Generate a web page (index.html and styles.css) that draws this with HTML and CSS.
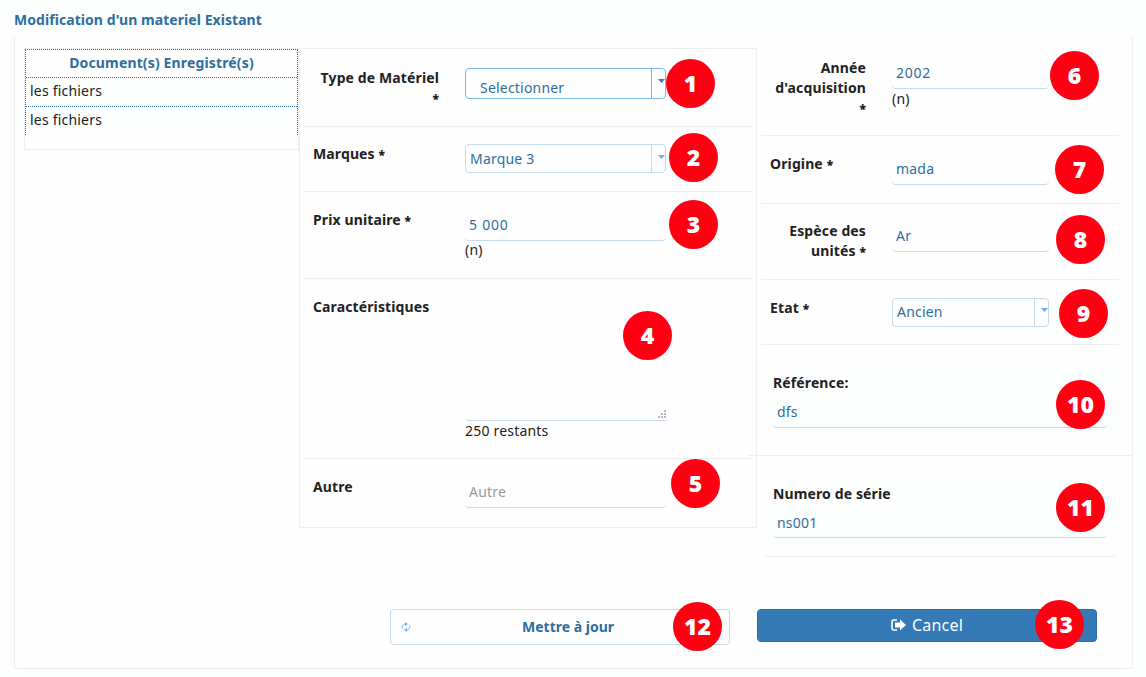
FILE: index.html
```html
<!DOCTYPE html>
<html lang="fr">
<head>
<meta charset="utf-8">
<title>Modification d'un materiel Existant</title>
<link rel="stylesheet" href="styles.css">
</head>
<body>
<div class="page">
  <h1 class="title">Modification d'un materiel Existant</h1>
  <main class="panel">
    <div class="columns">
      <aside class="docs">
        <div class="docs-table">
          <div class="docs-head">Document(s) Enregistré(s)</div>
          <div class="docs-row">les fichiers</div>
          <div class="docs-row">les fichiers</div>
        </div>
      </aside>
      <section class="middle">
        <div class="row r-type"><label class="label wrap">Type de Matériel<br><b>*</b></label><div class="field"><div class="select focus"><span>Selectionner</span><i><svg width="7" height="4" viewBox="0 0 7 4"><path d="M0 0h7L3.5 4z"/></svg></i></div></div></div>
        <div class="row r-marques"><label class="label">Marques <b>*</b></label><div class="field"><div class="select"><span>Marque 3</span><i><svg width="7" height="4" viewBox="0 0 7 4"><path d="M0 0h7L3.5 4z"/></svg></i></div></div></div>
        <div class="row r-prix"><label class="label">Prix unitaire <b>*</b></label><div class="field"><div class="input digits">5 000</div><div class="hint up">(n)</div></div></div>
        <div class="row r-carac"><label class="label">Caractéristiques</label><div class="field"><div class="area"><svg width="8" height="8" viewBox="0 0 8 8"><path d="M6 0h2v2H6zM3 3h2v2H3zM6 3h2v2H6zM0 6h2v2H0zM3 6h2v2H3zM6 6h2v2H6z"/></svg></div><div class="hint">250 restants</div></div></div>
        <div class="row r-autre"><label class="label">Autre</label><div class="field"><div class="input empty">Autre</div></div></div>
      </section>
      <section class="right">
        <div class="row r-annee"><label class="label wrap">Année<br>d'acquisition<br><b>*</b></label><div class="field"><div class="input digits">2002</div><div class="hint">(n)</div></div></div>
        <div class="row r-origine"><label class="label">Origine <b>*</b></label><div class="field"><div class="input">mada</div></div></div>
        <div class="row r-espece"><label class="label wrap">Espèce des<br>unités <b>*</b></label><div class="field"><div class="input">Ar</div></div></div>
        <div class="row r-etat"><label class="label">Etat <b>*</b></label><div class="field"><div class="select raised"><span>Ancien</span><i><svg width="7" height="4" viewBox="0 0 7 4"><path d="M0 0h7L3.5 4z"/></svg></i></div></div></div>
        <div class="stack s-ref"><label class="label">Référence:</label><div class="input">dfs</div></div>
        <div class="stack s-num"><label class="label">Numero de série</label><div class="input">ns001</div></div>
      </section>
    </div>
    <div class="actions">
      <div class="btn update"><svg class="sync" width="10" height="10" viewBox="0 0 10 10"><path d="M1.800 7.200C.2 5 1.500 2 4.500 2M8.200 2.800C9.800 5 8.500 8 5.500 8"/><path class="tip" d="M4 0l3 2-3 2zM6 6L3 8l3 2z"/></svg><span>Mettre à jour</span></div>
      <div class="btn cancel"><svg width="15" height="12" viewBox="0 0 15 12"><path class="door" d="M6 1H3Q1 1 1 3v6q0 2 2 2h3"/><path class="arrow" d="M4 3.500h5V.5L15 6l-6 5.500v-3H4z"/></svg><span>Cancel</span></div>
    </div>
  </main>
  <span class="badge b1">1</span><span class="badge b2">2</span><span class="badge b3">3</span><span class="badge b4">4</span><span class="badge b5">5</span><span class="badge b6">6</span><span class="badge b7">7</span><span class="badge b8">8</span><span class="badge b9">9</span><span class="badge b10">10</span><span class="badge b11">11</span><span class="badge b12">12</span><span class="badge b13">13</span>
</div>
</body>
</html>
```
FILE: styles.css
```css
* { box-sizing: border-box; }
body { margin: 0; background: #fcfefe; color: #222; font: 14px/20px "Noto Sans", "Open Sans", sans-serif; letter-spacing: 0.2px; }
.page { position: relative; width: 1146px; height: 677px; overflow: hidden; }
.title { margin: 0; height: 37px; padding: 10px 0 0 14px; font-size: 14px; line-height: 20px; letter-spacing: 0.06px; color: #2e6e9e; }
.panel { margin-left: 14px; width: 1119px; height: 632px; border: 1px solid #eee; border-top: 0; background: linear-gradient(90deg, #fcfefe 13px, #fefefe 13px, #fefefe 1104px, #fcfefe 1104px); }
.columns { display: flex; align-items: flex-start; height: 572px; padding-left: 9px; }
.docs { flex: none; width: 275px; height: 102px; margin-top: 11px; border: 1px solid #eee; }
.docs-table { width: 273px; height: 86px; border: 1px dotted #2e6e9e; border-bottom: 0; background: #fcfefe; }
.docs-head { height: 27px; padding-top: 3px; text-align: center; font-weight: 700; letter-spacing: 0.15px; color: #2e6e9e; background: #fefefe; }
.docs-row { height: 29px; padding: 3px 4px; border-top: 1px dotted #2e6e9e; }
.middle { flex: none; width: 458px; height: 480px; margin-top: 11px; padding: 0 4px; border: 1px solid #eee; }
.row { display: flex; align-items: flex-start; border-bottom: 1px solid #eee; }
.middle .row { padding-left: 9px; }
.middle .label { width: 126px; margin-right: 26px; }
.middle .field { width: 201px; }
.label { font-weight: 700; letter-spacing: 0.12px; white-space: nowrap; }
.label b { font-size: 12px; line-height: 12px; }
.wrap { text-align: right; }
.r-type { height: 78px; padding-top: 19px; }
.r-marques { height: 65px; padding-top: 17px; }
.r-prix { height: 87px; padding-top: 18px; }
.r-carac { height: 180px; padding-top: 18px; }
.middle .r-autre { height: 68px; padding-top: 18px; border: 0; }
.select { display: flex; justify-content: space-between; height: 29px; padding-left: 4px; line-height: 28px; color: #2e6e9e; border: 1px solid #c5dbec; border-radius: 4px; background: #fefefe; }
.select i { width: 14px; padding: 9px 0 0 6px; border-left: 1px solid #c5dbec; line-height: 0; overflow: hidden; }
.select svg { fill: #6db0e4; }
.raised { line-height: 26px; }
.raised i { padding-top: 8px; }
.focus { height: 31px; padding-left: 14px; line-height: 38px; border-color: #79b7e7; }
.focus i { border-color: #79b7e7; }
.focus svg { fill: #2e83d8; }
.input { height: 31px; padding-left: 4px; line-height: 30px; color: #2e6e9e; border-bottom: 1px solid #c5dbec; border-radius: 4px; }
.digits { letter-spacing: 0.75px; }
.empty { color: #999; }
.hint { line-height: 20px; }
.up { margin-top: -1px; }
.area { display: flex; justify-content: flex-end; align-items: flex-end; width: 203px; height: 124px; padding: 0 2px 2px; border-bottom: 1px solid #c5dbec; border-radius: 4px; }
.area svg { fill: #bbb; }
.right { flex: none; width: 375px; }
.right .row { width: 358px; margin-left: 4px; padding-left: 9px; }
.right .row .label { width: 96px; margin-right: 26px; }
.right .field { width: 157px; }
.right .r-annee { height: 99px; padding-top: 21px; }
.right .r-origine { height: 68px; padding-top: 18px; }
.right .r-espece { height: 76px; padding-top: 17px; }
.right .r-etat { height: 65px; padding-top: 18px; }
.stack { border-bottom: 1px solid #eee; }
.stack .label { display: block; margin-bottom: 4px; }
.s-ref { height: 111px; margin-left: -9px; padding: 28px 25px 0 25px; background: linear-gradient(#fcfefe, #fcfefe) 9px 19px / 366px 73px no-repeat; }
.s-num { height: 101px; margin: 0 16px 0 7px; padding: 28px 9px 0; background: linear-gradient(#fcfefe, #fcfefe) 0 19px no-repeat; }
.s-num .label { margin-bottom: 3px; }
.s-num .input { line-height: 32px; }
.actions { display: flex; align-items: flex-start; gap: 27px; padding-left: 375px; }
.btn { width: 340px; border-radius: 4px; display: flex; align-items: center; }
.update { height: 36px; padding-left: 10px; border: 1px solid #c5dbec; background: #fefefe; color: #2e6e9e; font-weight: 700; letter-spacing: 0; }
.update span { margin-left: 111px; }
.sync { fill: none; stroke: #6db0e4; stroke-width: 1; }
.sync .tip { fill: #6db0e4; stroke: none; }
.cancel { height: 33px; padding-bottom: 2px; justify-content: center; gap: 6px; border: 1px solid #2e6da4; background: #337ab7; color: #fff; font-size: 16px; }
.door { fill: none; stroke: #fff; stroke-width: 1.6; }
.arrow { fill: #fff; }
.badge { position: absolute; width: 49px; height: 49px; border-radius: 50%; background: #ff0012; color: #fff; font: 900 23px/48px "Noto Sans", "Open Sans", sans-serif; letter-spacing: 0; text-align: center; }
.b1 { left: 666px; top: 59px; }
.b2 { left: 669px; top: 133px; }
.b3 { left: 669px; top: 200px; }
.b4 { left: 623px; top: 311px; }
.b5 { left: 671px; top: 459px; }
.b6 { left: 1050px; top: 51px; }
.b7 { left: 1055px; top: 145px; }
.b8 { left: 1056px; top: 215px; }
.b9 { left: 1059px; top: 289px; }
.b10 { left: 1056px; top: 380px; }
.b11 { left: 1056px; top: 483px; }
.b12 { left: 673px; top: 602px; }
.b13 { left: 1035px; top: 600px; }
```
